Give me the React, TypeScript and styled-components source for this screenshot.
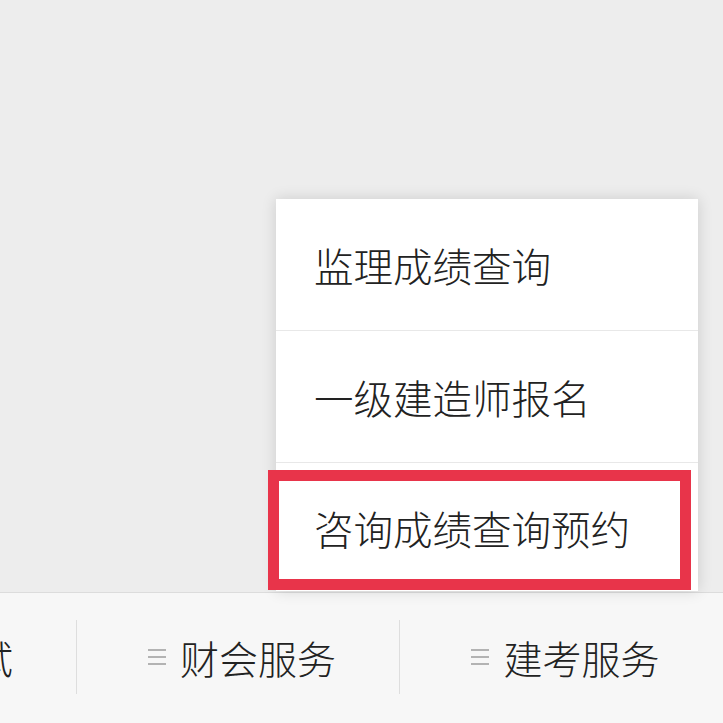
import React from "react";
import styled, { createGlobalStyle } from "styled-components";

const Global = createGlobalStyle`
  html, body { margin: 0; padding: 0; }
  body {
    background: #ededed;
    font-family: "Noto Sans CJK SC", "Noto Sans", sans-serif;
  }
`;

const Screen = styled.div`
  position: relative;
  width: 723px;
  height: 723px;
  overflow: hidden;
  background: #ededed;
  display: flex;
  flex-direction: column;
`;

const Content = styled.div`
  flex: 0 0 592px;
`;

const TabBar = styled.nav`
  flex: 1;
  display: grid;
  grid-template-columns: repeat(3, 323px);
  margin-left: -246px;
  background: #f7f7f7;
  border-top: 1px solid #dcdcdc;
  box-sizing: border-box;
  padding-top: 27px;
  align-items: start;
`;

const Tab = styled.div<{ $divider?: boolean }>`
  height: 74px;
  box-sizing: border-box;
  padding-left: 8px;
  display: flex;
  align-items: center;
  justify-content: center;
  gap: 14px;
  border-right: ${(p) => (p.$divider ? "1px solid #dedede" : "none")};
  font-size: 39px;
  font-weight: 300;
  color: #222;
  line-height: 1;
`;

const Burger = styled.span`
  display: flex;
  flex-direction: column;
  gap: 5px;
  width: 18px;
  span {
    display: block;
    height: 2px;
    background: #b3b3b3;
  }
`;

const Menu = styled.ul`
  position: absolute;
  left: 276px;
  top: 199px;
  width: 422px;
  margin: 0;
  padding: 0;
  list-style: none;
  background: #fff;
  box-shadow: 0 0 14px rgba(0, 0, 0, 0.14);
`;

const MenuItem = styled.li`
  height: 131px;
  display: flex;
  align-items: center;
  padding-left: 38px;
  font-size: 39.5px;
  font-weight: 300;
  color: #222;
  border-bottom: 1px solid #e8e8e8;
  &:last-child {
    border-bottom: none;
    height: 128px;
  }
`;

const Highlight = styled.div`
  position: absolute;
  left: 268px;
  top: 470px;
  width: 423px;
  height: 120px;
  box-sizing: border-box;
  border: 11px solid #e8344a;
  pointer-events: none;
`;

const tabs = ["学历考试", "财会服务", "建考服务"];
const items = ["监理成绩查询", "一级建造师报名", "咨询成绩查询预约"];

export default function App() {
  return (
    <Screen>
      <Global />
      <Content />
      <TabBar>
        {tabs.map((t, i) => (
          <Tab key={t} $divider={i < tabs.length - 1}>
            <Burger>
              <span />
              <span />
              <span />
            </Burger>
            <span>{t}</span>
          </Tab>
        ))}
      </TabBar>
      <Menu>
        {items.map((it) => (
          <MenuItem key={it}>{it}</MenuItem>
        ))}
      </Menu>
      <Highlight />
    </Screen>
  );
}
